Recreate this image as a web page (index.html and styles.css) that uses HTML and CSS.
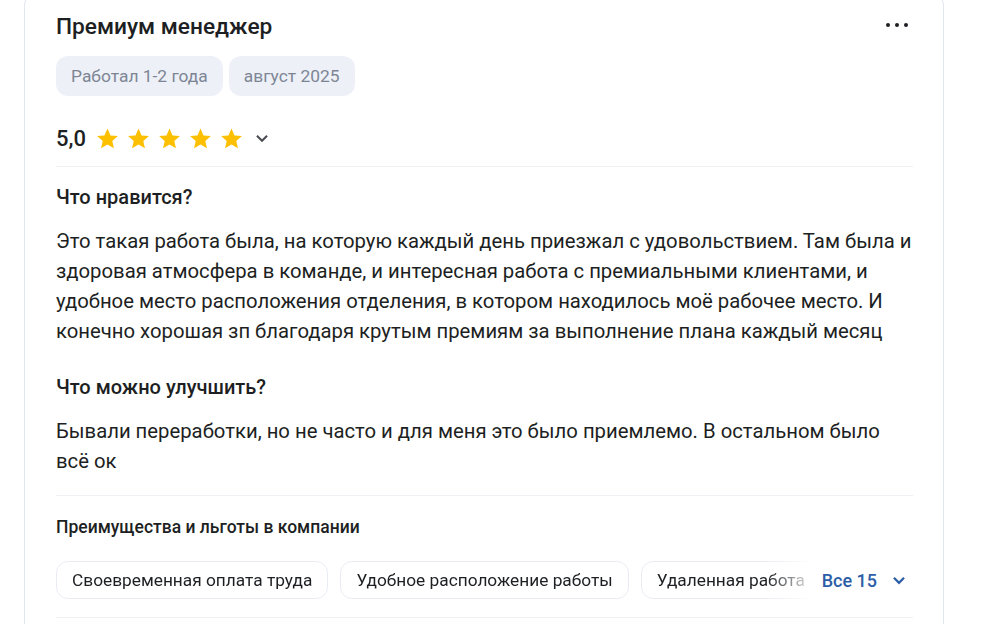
FILE: index.html
```html
<!DOCTYPE html>
<html lang="ru">
<head>
    <meta charset="UTF-8">
    <meta name="viewport" content="width=device-width, initial-scale=1.0">
    <title>Отзыв</title>
    <link rel="stylesheet" href="styles.css">
</head>
<body>
    <div class="review">
        <div class="review-head">
            <h2 class="review-title">Премиум менеджер</h2>
            <button class="more" aria-label="Ещё">
                <span></span><span></span><span></span>
            </button>
        </div>
        <div class="tags">
            <span class="tag">Работал 1-2 года</span>
            <span class="tag">август 2025</span>
        </div>
        <div class="rating">
            <span class="rating-value">5,0</span>
            <div class="stars">
                <svg viewBox="0 0 24 24"><path d="M12 2.5l2.9 6.6 7.1.6-5.4 4.7 1.6 7-6.2-3.7-6.2 3.7 1.6-7L2 9.7l7.1-.6z"/></svg>
                <svg viewBox="0 0 24 24"><path d="M12 2.5l2.9 6.6 7.1.6-5.4 4.7 1.6 7-6.2-3.7-6.2 3.7 1.6-7L2 9.7l7.1-.6z"/></svg>
                <svg viewBox="0 0 24 24"><path d="M12 2.5l2.9 6.6 7.1.6-5.4 4.7 1.6 7-6.2-3.7-6.2 3.7 1.6-7L2 9.7l7.1-.6z"/></svg>
                <svg viewBox="0 0 24 24"><path d="M12 2.5l2.9 6.6 7.1.6-5.4 4.7 1.6 7-6.2-3.7-6.2 3.7 1.6-7L2 9.7l7.1-.6z"/></svg>
                <svg viewBox="0 0 24 24"><path d="M12 2.5l2.9 6.6 7.1.6-5.4 4.7 1.6 7-6.2-3.7-6.2 3.7 1.6-7L2 9.7l7.1-.6z"/></svg>
            </div>
            <svg class="chevron" viewBox="0 0 16 16"><path d="M3.5 6l4.5 4.5L12.5 6"/></svg>
        </div>

        <div class="section">
            <h3>Что нравится?</h3>
            <p>Это такая работа была, на которую каждый день приезжал с удовольствием. Там была и здоровая атмосфера в команде, и интересная работа с премиальными клиентами, и удобное место расположения отделения, в котором находилось моё рабочее место. И конечно хорошая зп благодаря крутым премиям за выполнение плана каждый месяц</p>
            <h3 class="next">Что можно улучшить?</h3>
            <p>Бывали переработки, но не часто и для меня это было приемлемо. В остальном было всё ок</p>
        </div>

        <div class="benefits">
            <h4>Преимущества и льготы в компании</h4>
            <div class="chips-row">
                <div class="chips">
                    <span class="chip">Своевременная оплата труда</span>
                    <span class="chip">Удобное расположение работы</span>
                    <span class="chip">Удаленная работа</span>
                </div>
                <button class="show-all">Все 15
                    <svg viewBox="0 0 16 16"><path d="M3.5 6l4.5 4.5L12.5 6"/></svg>
                </button>
            </div>
        </div>
    </div>
</body>
</html>
```

FILE: styles.css
```css
body {
    margin: 0;
    background: #fff;
    font-family: Roboto, 'Noto Sans', sans-serif;
    color: #1d1f23;
}
.review {
    width: 857px;
    margin: -10px 0 0 24px;
    padding: 22px 30px 6px 31px;
    border: 1px solid #e2e6ed;
    border-bottom: none;
    border-radius: 16px 16px 0 0;
    background: #fff;
}
.review-head {
    display: flex;
    align-items: center;
    justify-content: space-between;
}
.review-title {
    margin: 0;
    font-size: 22.7px;
    line-height: 28px;
    font-weight: 500;
}
.more {
    display: flex;
    gap: 5px;
    padding: 0 5px 0 0;
    border: none;
    background: none;
    margin-top: -4px;
}
.more span {
    width: 4px;
    height: 4px;
    border-radius: 50%;
    background: #1d1f23;
}
.tags {
    display: flex;
    gap: 6px;
    margin-top: 15px;
}
.tag {
    height: 40px;
    display: flex;
    align-items: center;
    padding: 0 15px;
    border-radius: 12px;
    background: #edf1f7;
    color: #7d8595;
    font-size: 17.4px;
}
.rating {
    display: flex;
    align-items: center;
    height: 32px;
    margin-top: 26px;
    padding-bottom: 12px;
    border-bottom: 1px solid #eef0f4;
}
.rating-value {
    font-size: 22px;
    font-weight: 500;
    margin-right: 9px;
}
.stars {
    display: flex;
    gap: 6px;
}
.stars svg {
    width: 25px;
    height: 25px;
    fill: #fdc000;
}
.chevron {
    width: 18px;
    height: 18px;
    margin-left: 9px;
    fill: none;
    stroke: #4a4d52;
    stroke-width: 1.8;
}
.section {
    padding: 18px 0 19px;
    border-bottom: 1px solid #eef0f4;
}
.section h3 {
    margin: 0 0 17px;
    font-size: 20px;
    line-height: 24px;
    font-weight: 500;
}
.section h3.next {
    margin-top: 29px;
}
.section p {
    margin: 0;
    font-size: 20.3px;
    line-height: 30px;
}
.benefits {
    padding: 20px 0 18px;
    border-bottom: 1px solid #eef0f4;
}
.benefits h4 {
    margin: 0 0 23px;
    font-size: 17.5px;
    line-height: 22px;
    font-weight: 500;
}
.chips-row {
    display: flex;
    align-items: center;
}
.chips {
    flex: 1;
    display: flex;
    gap: 12px;
    overflow: hidden;
    -webkit-mask-image: linear-gradient(to right, #000 calc(100% - 50px), transparent);
    mask-image: linear-gradient(to right, #000 calc(100% - 50px), transparent);
}
.chip {
    flex-shrink: 0;
    height: 38px;
    box-sizing: border-box;
    display: flex;
    align-items: center;
    padding: 0 15px;
    border: 1px solid #e9ecf2;
    border-radius: 12px;
    font-size: 17.3px;
    white-space: nowrap;
}
.show-all {
    display: flex;
    align-items: center;
    gap: 13px;
    margin-left: 6px;
    padding: 0 5px 0 0;
    border: none;
    background: none;
    font-family: inherit;
    font-size: 18px;
    font-weight: 500;
    color: #2d5ea8;
}
.show-all svg {
    width: 18px;
    height: 18px;
    fill: none;
    stroke: #2d5ea8;
    stroke-width: 2;
}
```
